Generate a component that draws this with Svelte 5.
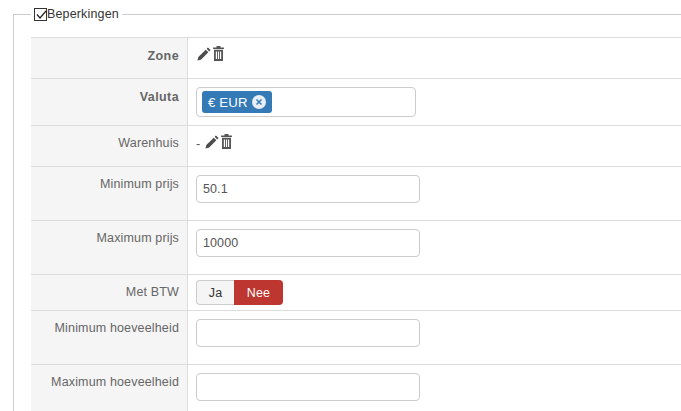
<script>
  const pencil = "M0.500 15.500 L1.500 11.500 L10 3 L13 6 L4.500 14.500 Z M11 2 L12.500 0.500 L15.500 3.500 L14 5 Z";
  const rows = [
    { label: "Minimum prijs", value: "50.1" },
    { label: "Maximum prijs", value: "10000" }
  ];
  const rows2 = [{ label: "Minimum hoeveelheid" }, { label: "Maximum hoeveelheid" }];
</script>

{#snippet icons()}
  <svg class="pencil" width="14" height="14" viewBox="0 0 16 16"><path d={pencil} fill="#4d4d4d" /></svg>
  <svg class="trash" width="11" height="15" viewBox="0 0 11 15">
    <path d="M3.500 0h4v1.500h3.500v1.500H0V1.500h3.500zM1 3.800h9V15H1zM2.800 5.500v7.500h1.200V5.500zM4.900 5.500v7.500h1.200V5.500zM7 5.500v7.500h1.200V5.500z" fill="#555" fill-rule="evenodd" />
  </svg>
{/snippet}

<div class="page">
  <fieldset>
    <legend><span class="check"><svg width="12" height="12" viewBox="0 0 12 12"><path d="M2 5.500 L5 9 L11 2" fill="none" stroke="#222" stroke-width="1.200" /></svg></span>Beperkingen</legend>
    <div class="table">
      <div class="row zone">
        <div class="label bold">Zone</div>
        <div class="field">{@render icons()}</div>
      </div>
      <div class="row valuta">
        <div class="label bold">Valuta</div>
        <div class="field">
          <div class="tags"><span class="tag">€ EUR<span class="remove"><svg width="14" height="14" viewBox="0 0 14 14"><circle cx="7" cy="7" r="7" fill="#e8eef5" /><path d="M4.500 4.500l5 5M9.500 4.500l-5 5" stroke="#337ab7" stroke-width="1.500" /></svg></span></span></div>
        </div>
      </div>
      <div class="row zone">
        <div class="label">Warenhuis</div>
        <div class="field"><span class="dash">-</span>{@render icons()}</div>
      </div>
      {#each rows as r}
        <div class="row input-row">
          <div class="label">{r.label}</div>
          <div class="field"><input type="text" value={r.value} /></div>
        </div>
      {/each}
      <div class="row btw">
        <div class="label">Met BTW</div>
        <div class="field"><div class="toggle"><span class="ja">Ja</span><span class="nee">Nee</span></div></div>
      </div>
      {#each rows2 as r}
        <div class="row input-row">
          <div class="label">{r.label}</div>
          <div class="field"><input type="text" /></div>
        </div>
      {/each}
    </div>
  </fieldset>
</div>

<style>
  :global(body) {
    margin: 0;
    background: #fff;
    overflow: hidden;
  }
  .page {
    height: 411px;
    overflow: hidden;
    padding: 7px 0 0 13px;
    box-sizing: border-box;
    font-family: "Liberation Sans", Arial, sans-serif;
    font-size: 12.5px;
    letter-spacing: 0.15px;
    color: #555;
  }
  fieldset {
    margin: 0;
    padding: 16px 0 0 17px;
    border: 1px solid #ccc;
    border-right: none;
    min-width: 0;
  }
  legend {
    margin-left: 0;
    padding: 0 3px;
    font-size: 12.5px;
    color: #333;
    display: flex;
    align-items: center;
    height: 14px;
  }
  .check {
    width: 11px;
    height: 11px;
    border: 1px solid #333;
    display: inline-block;
    line-height: 0;
  }
  .table {
    border-top: 1px solid #ddd;
  }
  .row {
    display: flex;
    border-bottom: 1px solid #ddd;
    box-sizing: border-box;
  }
  .zone { height: 41px; }
  .valuta { height: 47px; }
  .input-row { height: 54px; }
  .btw { height: 36px; }
  .label {
    width: 157px;
    flex: none;
    box-sizing: border-box;
    background: #f5f5f5;
    border-right: 1px solid #ddd;
    text-align: right;
    padding: 10px 8px 0 0;
    color: #666;
  }
  .bold {
    font-weight: 700;
    letter-spacing: 0.4px;
    padding-top: 11px;
  }
  .field {
    padding: 8px 8px 0 8px;
    flex: 1;
    display: flex;
    align-items: flex-start;
    gap: 2px;
  }
  .dash { margin-right: 2px; line-height: 20px; }
  .pencil { margin-top: 1px; margin-left: 1px; }
  .tags {
    width: 220px;
    height: 30px;
    border: 1px solid #ccc;
    border-radius: 4px;
    box-sizing: border-box;
    padding: 3px 5px;
  }
  .tag {
    display: inline-flex;
    align-items: center;
    gap: 4px;
    height: 22px;
    padding: 0 6px;
    background: #337ab7;
    color: #fff;
    border-radius: 3px;
    font-size: 13.2px;
  }
  .remove { line-height: 0; }
  input {
    width: 224px;
    height: 28px;
    border: 1px solid #ccc;
    border-radius: 4px;
    box-sizing: border-box;
    padding: 0 6px;
    font-family: inherit;
    font-size: 12.5px;
    letter-spacing: 0.1px;
    color: #555;
    outline: none;
  }
  .toggle {
    display: flex;
    height: 25px;
    font-size: 12.5px;
    margin-top: -3px;
  }
  .ja, .nee {
    display: flex;
    align-items: center;
    justify-content: center;
  }
  .ja {
    width: 38px;
    border: 1px solid #ccc;
    border-right: none;
    border-radius: 4px 0 0 4px;
    background: #f5f5f5;
    color: #333;
    box-sizing: border-box;
  }
  .nee {
    width: 49px;
    background: #bd362f;
    color: #fff;
    border-radius: 0 4px 4px 0;
  }
</style>
